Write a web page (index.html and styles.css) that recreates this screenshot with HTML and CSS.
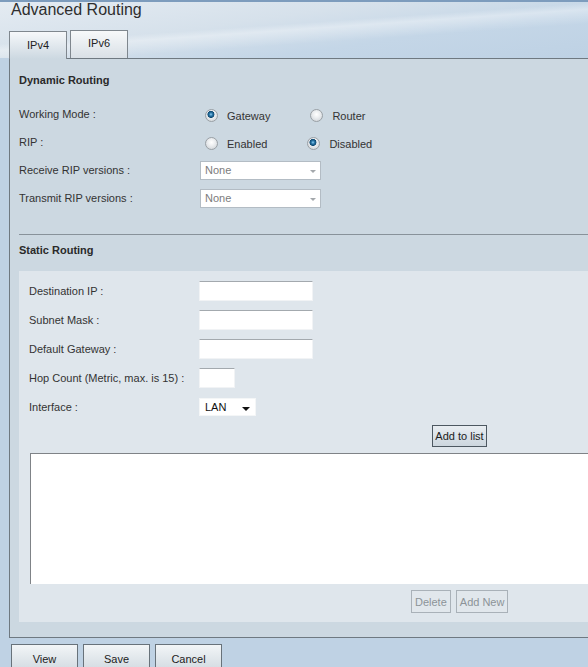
FILE: index.html
```html
<!DOCTYPE html>
<html lang="en">
<head>
    <meta charset="UTF-8">
    <title>Advanced Routing</title>
    <link rel="stylesheet" href="styles.css">
</head>
<body>
    <div class="top">
        <h1>Advanced Routing</h1>
        <div class="tabs">
            <div class="tab active">IPv4</div>
            <div class="tab">IPv6</div>
        </div>
    </div>

    <div class="panel">
        <h2>Dynamic Routing</h2>
        <div class="row">
            <span class="label">Working Mode :</span>
            <span class="option"><span class="radio checked"></span>Gateway</span>
            <span class="option"><span class="radio"></span>Router</span>
        </div>
        <div class="row">
            <span class="label">RIP :</span>
            <span class="option"><span class="radio"></span>Enabled</span>
            <span class="option"><span class="radio checked"></span>Disabled</span>
        </div>
        <div class="row">
            <span class="label">Receive RIP versions :</span>
            <div class="select disabled">None<span class="arrow"></span></div>
        </div>
        <div class="row">
            <span class="label">Transmit RIP versions :</span>
            <div class="select disabled">None<span class="arrow"></span></div>
        </div>

        <div class="divider"></div>

        <h2 class="static-title">Static Routing</h2>
        <div class="static">
            <div class="frow">
                <span class="flabel">Destination IP :</span>
                <input class="text" type="text">
            </div>
            <div class="frow">
                <span class="flabel">Subnet Mask :</span>
                <input class="text" type="text">
            </div>
            <div class="frow">
                <span class="flabel">Default Gateway :</span>
                <input class="text" type="text">
            </div>
            <div class="frow">
                <span class="flabel">Hop Count (Metric, max. is 15) :</span>
                <input class="text short" type="text">
            </div>
            <div class="frow">
                <span class="flabel">Interface :</span>
                <div class="select lan">LAN<span class="arrow dark"></span></div>
            </div>
            <div class="add-row">
                <button class="btn small">Add to list</button>
            </div>
            <div class="list"></div>
            <div class="list-actions">
                <button class="btn ghost">Delete</button>
                <button class="btn ghost">Add New</button>
            </div>
        </div>
    </div>

    <div class="actions">
        <button class="btn big">View</button>
        <button class="btn big">Save</button>
        <button class="btn big cancel">Cancel</button>
    </div>
</body>
</html>
```

FILE: styles.css
```css
html, body {
    margin: 0;
    overflow: hidden;
}

body {
    font-family: "Liberation Sans", Arial, sans-serif;
    font-size: 11px;
    color: #333;
    background-color: #bfd2e4;
    width: 700px;
    height: 667px;
}

.top {
    position: relative;
    height: 58px;
    background:
        linear-gradient(176deg, rgba(255, 255, 255, 0) 40%, rgba(255, 255, 255, 0.35) 46%, rgba(255, 255, 255, 0) 60%),
        linear-gradient(172deg, #e4ebf2 0%, #d6e1eb 35%, #c4d6e7 60%, #bcd0e3 100%);
    border-top: 2px solid #7d9cbd;
    box-sizing: border-box;
}

h1 {
    margin: 0;
    padding-left: 11px;
    font-size: 16px;
    font-weight: normal;
    line-height: 16px;
    color: #2e2e2e;
}

.tabs {
    display: flex;
    align-items: flex-start;
    height: 28px;
    margin-top: 12px;
    padding-left: 9px;
}

.tab {
    box-sizing: border-box;
    width: 58px;
    height: 28px;
    margin-right: 3px;
    padding-top: 6px;
    text-align: center;
    color: #222;
    border: 1px solid #7f878e;
    border-bottom: none;
    background: linear-gradient(to bottom, #f7f9fa, #d9e0e6);
}

.tab.active {
    position: relative;
    z-index: 1;
    margin-top: 1px;
    height: 28px;
    padding-top: 7px;
    background: linear-gradient(to bottom, #f6f8fa, #ccd8e1);
}

.panel {
    margin-left: 9px;
    height: 580px;
    box-sizing: border-box;
    background-color: #ccd8e1;
    border-top: 1px solid #6f7981;
    border-left: 1px solid #6f7981;
    border-bottom: 1px solid #6f7981;
    padding-top: 14px;
}

h2 {
    margin: 0 0 0 9px;
    font-size: 11px;
    line-height: 14px;
    font-weight: bold;
    color: #2a2a2a;
}

.row {
    display: flex;
    align-items: center;
    height: 28px;
    padding-left: 9px;
}

.row:first-of-type {
    margin-top: 13px;
}

.label {
    width: 181px;
}

.option {
    display: flex;
    align-items: center;
    margin-left: 5px;
    margin-right: 35px;
    padding-top: 4px;
}

.radio {
    box-sizing: border-box;
    width: 13px;
    height: 13px;
    margin-right: 9px;
    margin-bottom: 2px;
    border-radius: 50%;
    border: 1px solid #9aa0a5;
    background: radial-gradient(circle at 50% 40%, #ffffff 0, #eceef0 40%, #c9ced3 100%);
}

.radio.checked {
    background:
        radial-gradient(circle at 45% 40%, #8fd0f5 0, #2b77a8 1.6px, #0f4a72 3.2px, transparent 3.8px),
        radial-gradient(circle at 50% 40%, #ffffff 0, #eceef0 40%, #c9ced3 100%);
}

.select {
    position: relative;
    box-sizing: border-box;
    width: 121px;
    height: 19px;
    padding-left: 4px;
    line-height: 17px;
    background-color: #fff;
    border: 1px solid #b3bcc4;
}

.select.disabled {
    color: #7c7c7c;
}

.arrow {
    position: absolute;
    right: 4px;
    top: 8px;
    border-left: 3px solid transparent;
    border-right: 3px solid transparent;
    border-top: 3px solid #a4a8ac;
}

.arrow.dark {
    right: 5px;
    top: 8px;
    border-left-width: 4px;
    border-right-width: 4px;
    border-top: 4px solid #111;
}

.divider {
    margin: 22px 0 0 9px;
    border-top: 1px solid #88929a;
}

.static-title {
    margin-top: 8px;
}

.static {
    margin: 14px 0 0 9px;
    padding: 5px 0 9px 10px;
    background-color: #dfe6ec;
}

.frow {
    display: flex;
    align-items: center;
    height: 29px;
}

.flabel {
    width: 170px;
}

.text {
    box-sizing: border-box;
    width: 114px;
    height: 20px;
    margin: 0;
    border: 1px solid #f1f3f5;
    border-top-color: #a3a9ae;
    background-color: #fff;
}

.text.short {
    width: 36px;
}

.select.lan {
    width: 57px;
    height: 18px;
    border-color: #f4f6f7;
    color: #111;
    padding-left: 5px;
}

.btn {
    font-family: "Liberation Sans", Arial, sans-serif;
    font-size: 11px;
    margin: 0;
    padding: 0;
    color: #1c1c1c;
    border: 1px solid #5c666e;
    background: linear-gradient(to bottom, #f7f9fa, #d3dae0);
}

.add-row {
    padding-left: 403px;
    margin-top: 4px;
}

.btn.small {
    width: 55px;
    height: 22px;
    border-color: #4d5861;
    background: linear-gradient(to bottom, #e9eef2, #ccd6de);
}

.list {
    width: 600px;
    height: 131px;
    margin: 6px 0 0 1px;
    box-sizing: border-box;
    background-color: #fff;
    border-top: 1px solid #7f8387;
    border-left: 1px solid #7f8387;
}

.list-actions {
    display: flex;
    gap: 5px;
    margin-top: 6px;
    padding-left: 382px;
}

.btn.ghost {
    height: 23px;
    padding: 0 3px;
    color: #8c9398;
    border-color: #a9b1b8;
    background: #e1e7ec;
}

.actions {
    display: flex;
    margin-top: 6px;
    padding-left: 11px;
}

.btn.big {
    width: 67px;
    height: 30px;
    margin-right: 5px;
    border-color: #68727a;
    background: linear-gradient(to bottom, #f2f5f7, #cfd8df);
}
```
